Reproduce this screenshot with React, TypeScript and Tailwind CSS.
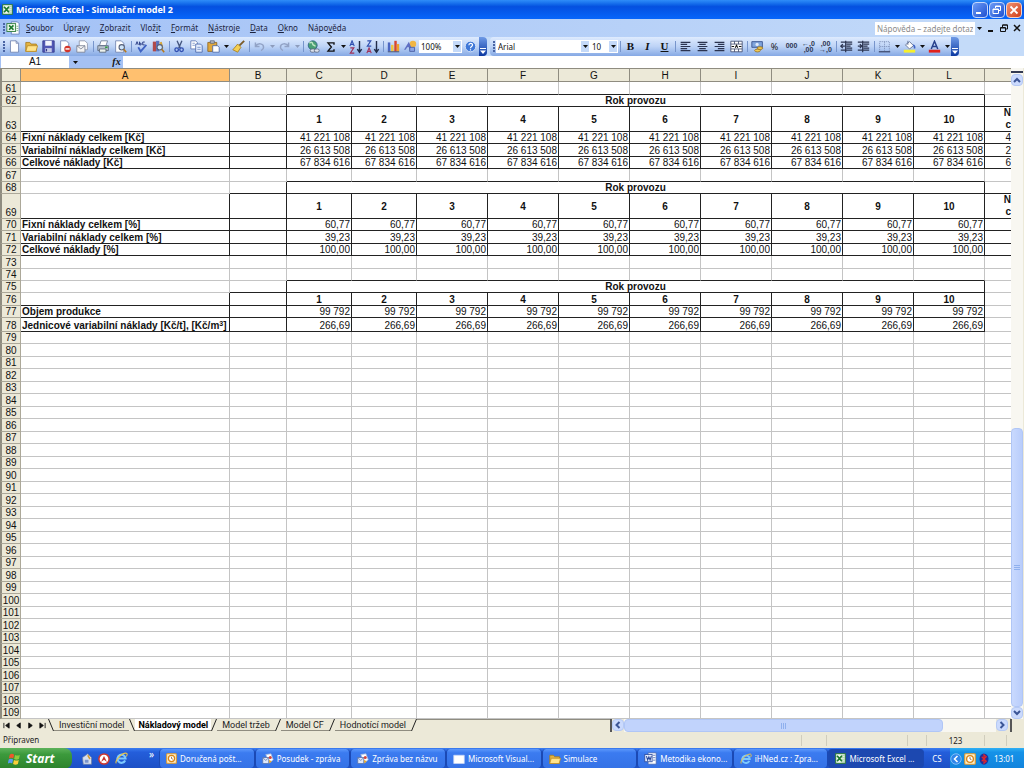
import { FC, ReactNode } from "react";
import clsx from "clsx";

/* SHEET DATA */

type Kind = "empty" | "title" | "years" | "data";

interface Row {
  n: number;
  h: string;
  kind: Kind;
  label?: ReactNode;
  value?: string;
  extra?: ReactNode;
}

const H12 = "h-[12px]";
const H13 = "h-[13px]";
const H14 = "h-[14px]";
const H25 = "h-[25px]";

const yearExtra = (
  <>
    N
    <br />c
  </>
);

const rows: Row[] = [
  { n: 61, h: H13, kind: "empty" },
  { n: 62, h: H12, kind: "title" },
  { n: 63, h: H25, kind: "years", extra: yearExtra },
  { n: 64, h: H12, kind: "data", label: "Fixní náklady celkem [Kč]", value: "41 221 108", extra: "4" },
  { n: 65, h: H13, kind: "data", label: "Variabilní náklady celkem [Kč]", value: "26 613 508", extra: "2" },
  { n: 66, h: H12, kind: "data", label: "Celkové náklady [Kč]", value: "67 834 616", extra: "6" },
  { n: 67, h: H13, kind: "empty" },
  { n: 68, h: H12, kind: "title" },
  { n: 69, h: H25, kind: "years", extra: yearExtra },
  { n: 70, h: H12, kind: "data", label: "Fixní náklady celkem [%]", value: "60,77", extra: " " },
  { n: 71, h: H13, kind: "data", label: "Variabilní náklady celkem [%]", value: "39,23", extra: " " },
  { n: 72, h: H12, kind: "data", label: "Celkové náklady [%]", value: "100,00", extra: " " },
  { n: 73, h: H13, kind: "empty" },
  { n: 74, h: H12, kind: "empty" },
  { n: 75, h: H12, kind: "title" },
  { n: 76, h: H13, kind: "years" },
  { n: 77, h: H12, kind: "data", label: "Objem produkce", value: "99 792" },
  {
    n: 78,
    h: H14,
    kind: "data",
    label: (
      <>
        Jednicové variabilní náklady [Kč/t], [Kč/m<sup className="text-[7px] leading-[0]">3</sup>]
      </>
    ),
    value: "266,69",
  },
];

for (let n = 79; n <= 109; n++) {
  rows.push({ n, h: n % 2 ? H12 : H13, kind: "empty" });
}

const years = [1, 2, 3, 4, 5, 6, 7, 8, 9, 10];
const letters = ["A", "B", "C", "D", "E", "F", "G", "H", "I", "J", "K", "L"];

/* SHEET */

const GRAY_R = "border-r-[#c4c4c4]";
const GRAY_B = "border-b-[#c4c4c4]";
const BLACK_R = "border-r-[#222]";
const BLACK_B = "border-b-[#222]";

interface CellProps {
  right?: boolean;
  bottom?: boolean;
  className?: string;
  colSpan?: number;
  children?: ReactNode;
}

const Cell: FC<CellProps> = ({ right, bottom, className, colSpan, children }) => (
  <td
    colSpan={colSpan}
    className={clsx(
      "border-r border-b px-px whitespace-nowrap overflow-hidden",
      right ? BLACK_R : GRAY_R,
      bottom ? BLACK_B : GRAY_B,
      className,
    )}
  >
    {children}
  </td>
);

const SheetRow: FC<{ row: Row; next?: Row }> = ({ row, next }) => {
  const { kind } = row;
  const boxed = kind === "years" || kind === "data";
  const aboveTitle = next?.kind === "title";
  const extraBottom =
    (boxed && row.extra !== undefined) || (kind === "title" && next?.extra !== undefined);
  return (
    <tr className={row.h}>
      <th className="border-r border-b border-l-2 border-[#aca899] border-l-[#8f8c80] bg-[#ece9d8] p-0 text-center align-bottom font-normal">
        {row.n}
      </th>
      <Cell right={boxed} bottom={boxed || next?.kind === "data"} className="align-bottom font-bold">
        {row.label}
      </Cell>
      <Cell right={boxed || kind === "title"} bottom={boxed || kind === "title"} />
      {kind === "title" ? (
        <Cell right bottom colSpan={10} className="text-center font-bold">
          Rok provozu
        </Cell>
      ) : (
        years.map((y) => (
          <Cell
            key={y}
            right={boxed}
            bottom={boxed || aboveTitle}
            className={kind === "years" ? "text-center align-middle font-bold" : "text-right align-bottom"}
          >
            {kind === "years" ? y : row.value}
          </Cell>
        ))
      )}
      <td
        className={clsx(
          "overflow-hidden border-b p-0 text-right align-bottom",
          extraBottom ? BLACK_B : GRAY_B,
          kind === "years" && "leading-[12px] font-bold",
        )}
      >
        {row.extra}
      </td>
    </tr>
  );
};

const Sheet: FC = () => (
  <table className="w-full table-fixed border-separate border-spacing-0 bg-white font-['Liberation_Sans',Arial,sans-serif] text-[10px] leading-[11px] text-[#111]">
    <colgroup>
      <col className="w-[21px]" />
      <col className="w-[209px]" />
      <col className="w-[57px]" />
      <col className="w-[65px]" />
      <col className="w-[65px]" />
      {letters.slice(4).map((l) => (
        <col key={l} className="w-[71px]" />
      ))}
      <col />
    </colgroup>
    <thead>
      <tr className="h-[14px] bg-[#ece9d8]">
        <th className="border border-l-2 border-[#8f8c80] p-0" />
        {letters.map((l) => (
          <th
            key={l}
            className={clsx(
              "border-y border-r border-[#8f8c80] p-0 font-normal",
              l === "A" && "bg-[#ffc06f]",
            )}
          >
            {l}
          </th>
        ))}
        <th className="border-y border-[#8f8c80] p-0" />
      </tr>
    </thead>
    <tbody>
      {rows.map((row, i) => (
        <SheetRow key={row.n} row={row} next={rows[i + 1]} />
      ))}
    </tbody>
  </table>
);

/* ICONS */

const Ico: FC<{ children: ReactNode; className?: string }> = ({ children, className }) => (
  <svg viewBox="0 0 16 16" fill="none" className={clsx("shrink-0", className ?? "size-[13px]")} aria-hidden>
    {children}
  </svg>
);

const page = "M3 1h7l3 3v11H3z";

const ExcelIcon: FC<{ className?: string }> = ({ className }) => (
  <Ico className={className}>
    <rect x="1" y="1" width="14" height="14" fill="#f4fbf2" stroke="#2c7a3a" strokeWidth="1.5" />
    <path d="M9 4h5M9 7h5M9 10h5M9 13h5" stroke="#6fae78" />
    <path d="M3 4l7 8M10 4l-7 8" stroke="#1d7a30" strokeWidth="2.6" />
  </Ico>
);

const WorkbookIcon: FC = () => (
  <Ico className="mr-[6px] size-[14px]">
    <path d="M6 1h7l2 2v12H6z" fill="#fff" stroke="#5f7fb8" />
    <path d="M12 6h2M12 8.5h2M12 11h2" stroke="#6fae78" />
    <rect x="1" y="3" width="10" height="9" fill="#eef8ec" stroke="#2c7a3a" />
    <path d="M3.5 5l5 5M8.5 5l-5 5" stroke="#1d7a30" strokeWidth="2" />
  </Ico>
);

const IEIcon: FC<{ className?: string }> = ({ className }) => (
  <Ico className={className}>
    <path d="M12.5 10.5A5 5 0 1 1 13 8H4" stroke="#7cc8ff" strokeWidth="2.6" />
    <path d="M1.5 14C-.5 10 9 .5 14 1.5c1.5.5 1 2.5 0 4" stroke="#f0c542" strokeWidth="1.3" />
  </Ico>
);

const OutlookIcon: FC<{ className?: string }> = ({ className }) => (
  <Ico className={className}>
    <rect x="1" y="1" width="14" height="14" rx="1" fill="#fff3cf" stroke="#e39a2b" strokeWidth="1.5" />
    <circle cx="8" cy="8" r="4.5" fill="#fff" stroke="#d98416" strokeWidth="1.8" />
    <path d="M8 5.5V8l2 1" stroke="#7a4a10" />
  </Ico>
);

const MessageIcon: FC<{ className?: string }> = ({ className }) => (
  <Ico className={className}>
    <path d="M5 2l7-1 3 8-5 4z" fill="#fff" stroke="#9db4dc" />
    <path d="M1 6h8v8H1z" fill="#dfe8fb" stroke="#5670a8" />
    <path d="M1 6l4 4 4-4" stroke="#5670a8" />
    <circle cx="11" cy="6" r="2" fill="#d2453c" />
    <path d="M9 9l4 2-3 3z" fill="#e7a62c" />
  </Ico>
);

const WordIcon: FC = () => (
  <Ico>
    <path d="M5 1h10v14H5z" fill="#fff" stroke="#4668b4" />
    <path d="M11 4h3M11 7h3M11 10h3" stroke="#4668b4" />
    <rect x="1" y="3" width="9" height="9" fill="#e8efff" stroke="#2b4a9c" />
    <path d="M3 5l1.5 5 1.5-4 1.5 4L9 5" stroke="#2b4a9c" strokeWidth="1.3" />
  </Ico>
);

const FolderIcon: FC<{ className?: string }> = ({ className }) => (
  <Ico className={className}>
    <path d="M1 3h5l1.5 2H14v9H1z" fill="#e3b341" stroke="#a77a1a" />
    <path d="M3 7h12.5L13.5 14H1z" fill="#ffe38a" stroke="#b88a26" />
  </Ico>
);

const Lens: FC = () => (
  <>
    <circle cx="9.5" cy="9" r="3.3" fill="#cfe6fb" stroke="#555f78" strokeWidth="1.3" />
    <path d="M12 11.5l3 3.5" stroke="#b7791d" strokeWidth="2" />
  </>
);

const Sort: FC<{ top: string; bottom: string }> = ({ top, bottom }) => (
  <Ico className="size-[14px]">
    <path d={top} stroke="#2f4fb0" strokeWidth="1.3" />
    <path d={bottom} stroke="#a0325a" strokeWidth="1.3" />
    <path d="M12 1v12M9.5 10.5L12 14l2.5-3.5" stroke="#222c48" strokeWidth="1.6" />
  </Ico>
);

const Lines: FC<{ d: string }> = ({ d }) => (
  <Ico>
    <path d={d} stroke="#2b3450" strokeWidth="1.5" />
  </Ico>
);

const Decimal: FC<{ left?: boolean }> = ({ left }) => (
  <span className="flex flex-col font-['Liberation_Sans',sans-serif] text-[7px] leading-[6px] font-bold text-[#2b3450]">
    <span>{left ? "←,0" : ",00"}</span>
    <span>{left ? ",00" : "→,0"}</span>
  </span>
);

/* TOOLBAR PARTS */

const Tool: FC<{ label: string; children: ReactNode }> = ({ label, children }) => (
  <button type="button" aria-label={label} className="flex h-full w-[17px] shrink-0 items-center justify-center">
    {children}
  </button>
);

const Triangle: FC<{ faded?: boolean }> = ({ faded }) => (
  <svg viewBox="0 0 5 3" className="h-[3px] w-[5px]" aria-hidden>
    <path d="M0 0h5L2.5 3z" fill={faded ? "#8d9cbc" : "#111"} />
  </svg>
);

const More: FC<{ label: string; faded?: boolean }> = ({ label, faded }) => (
  <button type="button" aria-label={label} className="flex h-full w-2 shrink-0 items-center justify-center">
    <Triangle faded={faded} />
  </button>
);

const Sep: FC = () => (
  <div className="flex w-1 shrink-0 justify-center">
    <div className="h-[11px] w-px bg-[#7795cc]" />
  </div>
);

const Grip: FC = () => (
  <div className="flex w-[6px] shrink-0 flex-col items-center gap-px pl-px">
    {[0, 1, 2, 3].map((i) => (
      <i key={i} className="size-[2px] bg-[#4a65a5]" />
    ))}
  </div>
);

const Overflow: FC<{ label: string }> = ({ label }) => (
  <button
    type="button"
    aria-label={label}
    className="flex h-full w-2 shrink-0 items-end justify-center rounded-r-sm bg-linear-to-b from-[#6f9ae6] to-[#0b37a0] pb-[2px]"
  >
    <svg viewBox="0 0 6 6" className="size-[6px]" aria-hidden>
      <path d="M0 0h6v1H0zM0 2.5h6L3 6z" fill="#fff" />
    </svg>
  </button>
);

const Combo: FC<{ label: string; value: string; className: string }> = ({ label, value, className }) => (
  <div className={clsx("relative h-[13px] shrink-0", className)}>
    <select
      aria-label={label}
      defaultValue={value}
      className="block size-full appearance-none bg-white pl-[2px] text-[8px] leading-[13px] text-[#111]"
    >
      <option>{value}</option>
    </select>
    <span className="pointer-events-none absolute inset-y-px right-px flex w-2 items-center justify-center bg-[#c4d9f8]">
      <Triangle />
    </span>
  </div>
);

const StandardBar: FC = () => (
  <div className="flex h-[19px] items-center rounded-r-sm bg-linear-to-b from-[#dfebfe] via-[#bdd3f6] to-[#86a9e4]">
    <Grip />
    <Tool label="Nový">
      <Ico><path d={page} fill="#fff" stroke="#6b7fae" /><path d="M10 1v3h3" stroke="#6b7fae" /></Ico>
    </Tool>
    <Tool label="Otevřít"><FolderIcon /></Tool>
    <Tool label="Uložit">
      <Ico>
        <path d="M1 1h14v14H1z" fill="#5157b4" stroke="#33388a" />
        <path d="M4 1h8v6H4z" fill="#f2f4fc" />
        <path d="M4 10h8v5H4z" fill="#c6cbe8" />
        <path d="M5.5 11v3" stroke="#33388a" strokeWidth="1.5" />
      </Ico>
    </Tool>
    <Tool label="Oprávnění">
      <Ico>
        <path d="M2 1h7l3 3v11H2z" fill="#fff" stroke="#6b7fae" />
        <circle cx="10.5" cy="11" r="4" fill="#d3362b" />
        <path d="M8 11h5" stroke="#fff" strokeWidth="1.8" />
      </Ico>
    </Tool>
    <Tool label="E-mail">
      <Ico>
        <path d="M4 1h7l3 3v8H4z" fill="#fff" stroke="#8b93a8" />
        <path d="M1 7h10v8H1z" fill="#f4f4f4" stroke="#777f92" />
        <path d="M1 7l5 4 5-4" stroke="#777f92" />
      </Ico>
    </Tool>
    <Sep />
    <Tool label="Tisk">
      <Ico>
        <path d="M5 1h8l-2 6H3z" fill="#fff" stroke="#6d7c94" />
        <path d="M1 7h13v6H1z" fill="#b9c3cf" stroke="#566276" />
        <path d="M3 11h8v4H3z" fill="#eef3ee" stroke="#566276" />
        <path d="M10 9h3" stroke="#2f9c3c" strokeWidth="2" />
      </Ico>
    </Tool>
    <Tool label="Náhled">
      <Ico><path d="M2 1h7l3 3v11H2z" fill="#fff" stroke="#6b7fae" /><Lens /></Ico>
    </Tool>
    <Sep />
    <Tool label="Pravopis">
      <Ico>
        <path d="M1 6l1.5-4L4 6M5.5 2v4h2V4h-2M12 2.5H9.5V6H12" stroke="#2b3f86" strokeWidth="1.2" />
        <path d="M4 9l3 5 7-8" stroke="#3f63c4" strokeWidth="2.2" />
      </Ico>
    </Tool>
    <Tool label="Zdroje informací">
      <Ico>
        <path d="M1 2h4v12H1z" fill="#b04a4a" />
        <path d="M5 1h4v13H5z" fill="#5a72bc" />
        <path d="M9 3l3-1 2 8-3 1z" fill="#d9a93a" />
        <Lens />
      </Ico>
    </Tool>
    <Sep />
    <Tool label="Vyjmout">
      <Ico>
        <path d="M5 1l4 9M11 1L7 10" stroke="#44557e" strokeWidth="1.6" />
        <circle cx="4.5" cy="12" r="2.2" stroke="#2f4db0" strokeWidth="1.6" />
        <circle cx="10.5" cy="12" r="2.2" stroke="#2f4db0" strokeWidth="1.6" />
      </Ico>
    </Tool>
    <Tool label="Kopírovat">
      <Ico>
        <path d="M1 1h6l2 2v8H1z" fill="#fff" stroke="#5a74b0" />
        <path d="M7 5h6l2 2v8H7z" fill="#e4edfd" stroke="#4562a8" />
        <path d="M9 9h4M9 11.5h4M3 4h3M3 6.5h3" stroke="#6d89c4" />
      </Ico>
    </Tool>
    <Tool label="Vložit">
      <Ico>
        <path d="M1 3h11v11H1z" fill="#e0a83c" stroke="#8c6420" />
        <path d="M4 1h5v3H4z" fill="#b9bfca" stroke="#5e6676" />
        <path d="M7 7h6l2 2v6H7z" fill="#fff" stroke="#4562a8" />
      </Ico>
    </Tool>
    <More label="Možnosti vložení" />
    <Tool label="Kopírovat formát">
      <Ico>
        <path d="M15 1l-6 6" stroke="#7a5a26" strokeWidth="2.2" />
        <path d="M7 5l4 4-4 6-6-3z" fill="#f4cf52" stroke="#a67c1c" />
      </Ico>
    </Tool>
    <Sep />
    <Tool label="Zpět">
      <Ico><path d="M3 3v5h5M3 8c3-5 10-4 10 1 0 2-1 3-3 4" stroke="#92a3c6" strokeWidth="1.8" /></Ico>
    </Tool>
    <More label="Historie zpět" faded />
    <Tool label="Znovu">
      <Ico><path d="M13 3v5H8M13 8C10 3 3 4 3 9c0 2 1 3 3 4" stroke="#92a3c6" strokeWidth="1.8" /></Ico>
    </Tool>
    <More label="Historie znovu" faded />
    <Sep />
    <Tool label="Hypertextový odkaz">
      <Ico>
        <circle cx="7" cy="6.5" r="5.5" fill="#4a9f74" stroke="#2b5f88" />
        <path d="M3 4c2-2 4-1 4 1s3 1 3 3" stroke="#bfe6c4" strokeWidth="1.8" />
        <rect x="4" y="11" width="6" height="4" rx="2" fill="#dde3ee" stroke="#59657e" />
        <rect x="9" y="11" width="6" height="4" rx="2" fill="#dde3ee" stroke="#59657e" />
      </Ico>
    </Tool>
    <Tool label="AutoSum">
      <Ico className="size-[12px]"><path d="M12 5V2.5H4L8.500 8 4 13.500H12V11" stroke="#111" strokeWidth="1.8" /></Ico>
    </Tool>
    <More label="Funkce" />
    <Tool label="Seřadit vzestupně"><Sort top="M1 7l2.5-6L6 7M2 5h3" bottom="M1.5 9h4L1.5 15h4.5" /></Tool>
    <Tool label="Seřadit sestupně"><Sort top="M1.5 1h4L1.5 7h4.5" bottom="M1 15l2.5-6L6 15M2 13h3" /></Tool>
    <Sep />
    <Tool label="Průvodce grafem">
      <Ico>
        <path d="M1 3h3v11H1z" fill="#4b66c2" />
        <path d="M5 6h3v8H5z" fill="#f0c63a" />
        <path d="M9 1h3v13H9z" fill="#d8452f" />
        <path d="M12 5h3v9h-3z" fill="#f0a02c" />
        <path d="M1 14.5h14" stroke="#37405c" />
      </Ico>
    </Tool>
    <Tool label="Kreslení">
      <Ico>
        <circle cx="11" cy="5" r="4" fill="#f1b645" />
        <path d="M6 2l4 10H7L6 9H4l-2 3H0z" fill="#5f6fc4" />
        <path d="M7 9h6v5H7z" fill="#8aa4e6" stroke="#42569c" />
      </Ico>
    </Tool>
    <Combo label="Lupa" value="100%" className="w-[43px]" />
    <Tool label="Nápověda">
      <Ico>
        <circle cx="8" cy="8" r="6.5" fill="#3f78d8" stroke="#e4eefc" />
        <path d="M6 6.5c0-3 4.5-3 4.5-.3C10.5 8 8 8 8 10M8 11.5V13" stroke="#fff" strokeWidth="1.5" />
      </Ico>
    </Tool>
    <Overflow label="Možnosti panelu Standardní" />
  </div>
);

const FormatBar: FC = () => (
  <div className="flex h-[19px] items-center rounded-sm bg-linear-to-b from-[#dfebfe] via-[#bdd3f6] to-[#86a9e4]">
    <Grip />
    <Combo label="Písmo" value="Arial" className="w-[94px]" />
    <Combo label="Velikost písma" value="10" className="w-[28px]" />
    <Sep />
    <Tool label="Tučné"><b className="font-['Liberation_Serif',serif] text-[11px] font-black text-[#111]">B</b></Tool>
    <Tool label="Kurzíva"><i className="font-['Liberation_Serif',serif] text-[11px] font-bold text-[#111]">I</i></Tool>
    <Tool label="Podtržené"><u className="font-['Liberation_Serif',serif] text-[11px] font-bold text-[#111]">U</u></Tool>
    <Sep />
    <Tool label="Zarovnat vlevo"><Lines d="M2 3h12M2 5.5h8M2 8h12M2 10.5h8M2 13h12" /></Tool>
    <Tool label="Na střed"><Lines d="M2 3h12M4 5.5h8M2 8h12M4 10.5h8M2 13h12" /></Tool>
    <Tool label="Zarovnat vpravo"><Lines d="M2 3h12M6 5.5h8M2 8h12M6 10.5h8M2 13h12" /></Tool>
    <Tool label="Sloučit a zarovnat na střed">
      <Ico>
        <path d="M1 1.5h14v13H1zM1 5h14M1 11h14M5.5 1.5V5M10.5 1.5V5M5.5 11v3.5M10.5 11v3.5" fill="#fff" stroke="#3b466a" />
        <path d="M2 8h3M11 8h3M6.5 9.5L8 6.5l1.5 3" stroke="#111" strokeWidth="1.3" />
      </Ico>
    </Tool>
    <Sep />
    <Tool label="Měna">
      <Ico>
        <path d="M1 2h13v7H1z" fill="#7fa4dc" stroke="#2f4a86" />
        <circle cx="7.5" cy="5.5" r="2" fill="#dfe9f9" />
        <ellipse cx="11" cy="10" rx="3.5" ry="1.7" fill="#f3cb54" stroke="#96701c" />
        <ellipse cx="8" cy="13" rx="3.5" ry="1.7" fill="#f3cb54" stroke="#96701c" />
      </Ico>
    </Tool>
    <Tool label="Styl procent"><span className="text-[9px] text-[#222]">%</span></Tool>
    <Tool label="Styl čárky"><span className="font-['Liberation_Sans',sans-serif] text-[7px] font-bold text-[#2b3450]">000</span></Tool>
    <Tool label="Přidat desetinné místo"><Decimal left /></Tool>
    <Tool label="Odebrat desetinné místo"><Decimal /></Tool>
    <Sep />
    <Tool label="Zmenšit odsazení"><Lines d="M1 2.5h14M8 5h7M8 7.5h5M8 10h7M1 12.5h14M6 7.5H1M3.5 5L1 7.5 3.5 10M7 1v14" /></Tool>
    <Tool label="Zvětšit odsazení"><Lines d="M1 2.5h14M8 5h7M8 7.5h5M8 10h7M1 12.5h14M1 7.5h5M3.5 5L6 7.5 3.5 10M7 1v14" /></Tool>
    <Sep />
    <Tool label="Ohraničení">
      <Ico>
        <path d="M2 2h12v12H2zM8 2v12M2 8h12" stroke="#7c8fb8" strokeDasharray="1.5 1" />
        <path d="M1 14.5h14" stroke="#39456a" strokeWidth="1.5" />
      </Ico>
    </Tool>
    <More label="Typy ohraničení" />
    <Tool label="Barva výplně">
      <Ico>
        <path d="M3 6l5-4 5 5-5 4z" fill="#fff" stroke="#56658a" />
        <path d="M6 1v5" stroke="#56658a" />
        <path d="M12.5 6c2 1 2 3 1.5 4.5" stroke="#3f63c4" strokeWidth="2" />
        <path d="M1 12h14v3.5H1z" fill="#f7f02a" />
      </Ico>
    </Tool>
    <More label="Barvy výplně" />
    <Tool label="Barva písma">
      <Ico>
        <path d="M4 11L8 1.5 12 11M5.5 8h5" stroke="#27408c" strokeWidth="1.8" />
        <path d="M1 12h14v3.5H1z" fill="#e0211b" />
      </Ico>
    </Tool>
    <More label="Barvy písma" />
    <Overflow label="Možnosti panelu Formát" />
  </div>
);

/* WINDOW CHROME */

const TitleBar: FC = () => (
  <header className="flex h-[19px] items-center gap-[3px] bg-linear-to-b from-[#2f8df8] via-[#0550e0] via-35% to-[#0766fb] px-[2px]">
    <ExcelIcon className="size-[11px]" />
    <h1 className="flex-1 font-['Noto_Sans',sans-serif] text-[9px] font-bold text-white">
      Microsoft Excel - Simulační model 2
    </h1>
    <div className="flex gap-px">
      <button type="button" aria-label="Minimalizovat" className="flex size-4 items-center justify-center rounded-sm border border-[#c5d8fb] bg-linear-to-br from-[#6d9bf6] to-[#1f4fd0]">
        <svg viewBox="0 0 10 10" className="size-[10px]"><path d="M1 7h5v2H1z" fill="#fff" /></svg>
      </button>
      <button type="button" aria-label="Obnovit" className="flex size-4 items-center justify-center rounded-sm border border-[#c5d8fb] bg-linear-to-br from-[#6d9bf6] to-[#1f4fd0]">
        <svg viewBox="0 0 10 10" className="size-[10px]" fill="none" stroke="#fff">
          <path d="M3.5 3V1h5v4.5H7M3.5 1.5h5M1 4h5.5v4.5H1zM1 4.5h5.5" />
        </svg>
      </button>
      <button type="button" aria-label="Zavřít" className="flex size-4 items-center justify-center rounded-sm border border-[#f3d3c8] bg-linear-to-br from-[#f0906f] to-[#cf3a12]">
        <svg viewBox="0 0 10 10" className="size-[10px]"><path d="M1.5 1.5l7 7M8.5 1.5l-7 7" stroke="#fff" strokeWidth="1.8" /></svg>
      </button>
    </div>
  </header>
);

const menus = [
  ["", "S", "oubor"],
  ["Úpr", "a", "vy"],
  ["", "Z", "obrazit"],
  ["Vlož", "i", "t"],
  ["", "F", "ormát"],
  ["", "N", "ástroje"],
  ["", "D", "ata"],
  ["", "O", "kno"],
  ["Nápo", "v", "ěda"],
];

const MenuBar: FC = () => (
  <nav className="flex h-[18px] items-center bg-linear-to-r from-[#a3c1f6] to-[#c4dbf9] text-[8px] text-[#1c2440]">
    <Grip />
    <WorkbookIcon />
    <div className="flex flex-1 gap-[10px]">
      {menus.map(([pre, key, post]) => (
        <button key={post} type="button">
          {pre}
          <u>{key}</u>
          {post}
        </button>
      ))}
    </div>
    <input
      aria-label="Nápověda"
      placeholder="Nápověda – zadejte dotaz"
      className="h-[13px] w-[100px] bg-white px-[2px] placeholder:text-[#8a8a8a]"
    />
    <More label="Předchozí dotazy" />
    <div className="ml-1 flex items-center gap-[5px] pr-[3px]">
      <button type="button" aria-label="Minimalizovat sešit">
        <svg viewBox="0 0 8 8" className="size-2"><path d="M1 6h5v2H1z" fill="#111" /></svg>
      </button>
      <button type="button" aria-label="Obnovit sešit">
        <svg viewBox="0 0 8 8" className="size-2" fill="none" stroke="#111"><path d="M2.5 3V1h5v4H6M2.5 1h5M.5 3.5h5v4h-5zM.5 4h5" /></svg>
      </button>
      <button type="button" aria-label="Zavřít sešit">
        <svg viewBox="0 0 8 8" className="size-2"><path d="M1 1l6 6M7 1L1 7" stroke="#111" strokeWidth="1.5" /></svg>
      </button>
    </div>
  </nav>
);

const FormulaBar: FC = () => (
  <div className="flex h-3 bg-[#a5c1f3] font-['Liberation_Sans',sans-serif] text-[10px] text-[#111]">
    <input aria-label="Pole názvů" defaultValue="A1" className="ml-px w-[68px] bg-white text-center leading-3" />
    <button type="button" aria-label="Seznam názvů" className="flex w-3 items-center justify-center">
      <Triangle />
    </button>
    <button type="button" aria-label="Vložit funkci" className="ml-auto flex w-[13px] items-center justify-center font-['Liberation_Serif',serif] text-[10px] leading-3 font-bold italic">
      fx
    </button>
    <input aria-label="Řádek vzorců" className="w-[calc(100%-123px)] bg-white" />
  </div>
);

/* SCROLLBARS */

const arrows = {
  up: "M1 6l3-3 3 3",
  down: "M1 2l3 3 3-3",
  left: "M5.5 1l-3 3 3 3",
  right: "M2.5 1l3 3-3 3",
};

const ScrollButton: FC<{ label: string; dir: keyof typeof arrows }> = ({ label, dir }) => (
  <button type="button" aria-label={label} className="flex size-3 shrink-0 items-center justify-center rounded-sm border border-[#b5c9f5] bg-[#cbdafd]">
    <svg viewBox="0 0 8 8" className="size-2" fill="none">
      <path d={arrows[dir]} stroke="#3b5596" strokeWidth="2" />
    </svg>
  </button>
);

const VerticalScroll: FC = () => (
  <div className="flex w-[13px] shrink-0 flex-col border-r border-[#ece9d8] bg-[#f8f7f1] pt-[3px]">
    <div className="mb-px h-[2px] bg-[#333a52]" />
    <ScrollButton label="Nahoru" dir="up" />
    <div className="flex-[343]" />
    <div className="flex flex-[277] flex-col items-center justify-center gap-px rounded-sm border border-[#b0c6f6] bg-linear-to-r from-[#c9d9fe] to-[#b9cdfb]">
      <i className="h-px w-[6px] bg-[#8fb0ee]" />
      <i className="h-px w-[6px] bg-[#8fb0ee]" />
      <i className="h-px w-[6px] bg-[#8fb0ee]" />
    </div>
    <ScrollButton label="Dolů" dir="down" />
  </div>
);

/* SHEET TABS */

const sheets = ["Investiční model", "Nákladový model", "Model tržeb", "Model CF", "Hodnotící model"];

const tabNav = [
  ["První list", "M1 1v6M7 1v6L3 4z"],
  ["Předchozí list", "M6 1v6L2 4z"],
  ["Další list", "M2 1v6l4-3z"],
  ["Poslední list", "M7 1v6M1 1v6l4-3z"],
];

const Slash: FC<{ back?: boolean }> = ({ back }) => (
  <svg viewBox="0 0 6 12" className="h-3 w-[6px] shrink-0" aria-hidden>
    <path d={back ? "M.5 0l5 12" : "M5.5 0l-5 12"} stroke="#222" />
  </svg>
);

const SheetTabs: FC = () => (
  <div className="flex h-[13px] bg-[#ece9d8] font-[Roboto,sans-serif] text-[9px] leading-3 text-[#222]">
    <div className="flex flex-[611] items-start">
      <div className="flex">
        {tabNav.map(([label, d]) => (
          <button key={label} type="button" aria-label={label} className="flex h-3 w-3 items-center justify-center">
            <svg viewBox="0 0 8 8" className="size-[7px]">
              <path d={d} fill="#111" stroke="#111" />
            </svg>
          </button>
        ))}
      </div>
      <Slash back />
      {sheets.map((name, i) => (
        <div key={name} className="flex">
          <button
            type="button"
            className={clsx(
              "h-3 border-b border-[#8f8c80] whitespace-nowrap",
              i === 1 ? "bg-white px-[3px] font-bold text-[#000]" : "px-[5px]",
            )}
          >
            {name}
          </button>
          <Slash back={i === 0} />
        </div>
      ))}
      <div className="h-px flex-1 bg-[#8f8c80]" />
    </div>
    <div className="flex flex-[413] border-l-2 border-[#555]">
      <ScrollButton label="Vlevo" dir="left" />
      <div className="flex flex-1 bg-[#f8f7f1]">
        <div className="flex flex-[318] items-center justify-center gap-px rounded-sm border border-[#b0c6f6] bg-[#c1d3fc]">
          <i className="h-[6px] w-px bg-[#8fb0ee]" />
          <i className="h-[6px] w-px bg-[#8fb0ee]" />
          <i className="h-[6px] w-px bg-[#8fb0ee]" />
        </div>
        <div className="flex-[53]" />
      </div>
      <ScrollButton label="Vpravo" dir="right" />
      <div className="mr-3 ml-[2px] w-[2px] bg-[#555]" />
    </div>
  </div>
);

const statusCells = ["w-[25px]", "w-[81px]", "w-[19px]", "w-[58px]", "w-[22px]", "w-[18px]"];

const StatusBar: FC = () => (
  <footer className="flex h-4 items-center bg-[#ece9d8] pl-[3px] text-[8px] text-[#222]">
    <span className="flex-1">Připraven</span>
    {statusCells.map((w, i) => (
      <span key={w} className={clsx("h-[11px] border-l border-[#d0cdbd] text-center leading-[11px]", w)}>
        {i === 3 ? "123" : ""}
      </span>
    ))}
  </footer>
);

/* TASKBAR */

const tasks: { name: string; icon: ReactNode }[] = [
  { name: "Doručená pošt...", icon: <OutlookIcon className="size-[11px]" /> },
  { name: "Posudek - zpráva", icon: <MessageIcon className="size-[12px]" /> },
  { name: "Zpráva bez názvu", icon: <MessageIcon className="size-[12px]" /> },
  { name: "Microsoft Visual...", icon: <Ico className="size-[12px]"><path d="M1 3h14v11H1z" fill="#fff" stroke="#c5d6f7" /></Ico> },
  { name: "Simulace", icon: <FolderIcon className="size-[12px]" /> },
  { name: "Metodika ekono...", icon: <WordIcon /> },
  { name: "iHNed.cz : Zpra...", icon: <IEIcon className="size-[12px]" /> },
  { name: "Microsoft Excel ...", icon: <ExcelIcon className="size-[11px]" /> },
];

const Taskbar: FC = () => (
  <div className="flex h-[21px] items-stretch bg-linear-to-b from-[#3c7df0] via-[#245edb] via-20% to-[#1c4fc4] text-[8px] text-white">
    <button
      type="button"
      className="flex w-[72px] shrink-0 items-center gap-1 rounded-r-lg bg-linear-to-b from-[#5db25b] via-[#3c9a3c] via-30% to-[#2c822c] pl-2 font-['Open_Sans',sans-serif] text-[12px] font-bold italic"
    >
      <Ico className="size-[14px]">
        <path d="M2 3c2-1.5 3.5-1 5 0L6 7.5c-1.5-1-3-1.2-5 0z" fill="#f0562b" />
        <path d="M8 3.3c2 1 3.5 1 5.5 0L12.5 8c-2 1-3.5 1-5.5 0z" fill="#8ecb3c" />
        <path d="M.8 8.7c2-1.5 3.5-1 5 0l-1 4.5c-1.5-1-3-1.2-5 0z" fill="#5a9cf5" />
        <path d="M6.8 9c2 1 3.5 1 5.5 0l-1 4.7c-2 1-3.5 1-5.5 0z" fill="#fbd03a" />
      </Ico>
      Start
    </button>
    <div className="flex w-[87px] shrink-0 items-center gap-[5px] pl-[9px]">
      <button type="button" aria-label="Zobrazit plochu">
        <Ico className="size-[12px]">
          <path d="M2 6l7-5 5 5v9H3z" fill="#d6dfef" stroke="#6c7da4" />
          <path d="M5 9h5v4H5z" fill="#7a94cc" />
          <path d="M9 3l3 5" stroke="#d59b2f" strokeWidth="2" />
        </Ico>
      </button>
      <button type="button" aria-label="Přehrávač">
        <Ico className="size-[12px]">
          <circle cx="8" cy="8" r="6.8" fill="#fff" stroke="#d0372f" strokeWidth="2" />
          <path d="M4 12l4-8 4 8-4-3z" fill="#c8322b" />
        </Ico>
      </button>
      <button type="button" aria-label="Internet Explorer"><IEIcon className="size-[13px]" /></button>
      <button type="button" className="mr-[5px] ml-auto self-start text-[10px] leading-3">»</button>
    </div>
    <div className="flex flex-1 items-stretch py-px">
      {tasks.map(({ name, icon }, i) => (
        <button
          key={name}
          type="button"
          className={clsx(
            "flex min-w-0 flex-1 items-center gap-[3px] rounded-sm border-r border-l border-[#1b49b4] pl-[6px] whitespace-nowrap",
            i === 7 ? "bg-[#1c48b0]" : "bg-linear-to-b from-[#5b97fb] via-[#3b7bf0] via-20% to-[#3572e6]",
          )}
        >
          {icon}
          {name}
        </button>
      ))}
    </div>
    <button type="button" className="w-[26px] shrink-0 text-center">CS</button>
    <div className="flex w-[74px] shrink-0 items-center gap-[2px] bg-linear-to-b from-[#2fb0f4] via-[#1592e8] via-20% to-[#1283dc]">
      <button type="button" aria-label="Zobrazit skryté ikony">
        <Ico className="size-[12px]">
          <circle cx="8" cy="8" r="7" fill="#2f86ea" stroke="#9cd0fb" />
          <path d="M10 4L6 8l4 4" stroke="#fff" strokeWidth="2" />
        </Ico>
      </button>
      <OutlookIcon className="size-[12px]" />
      <Ico className="size-[12px]">
        <ellipse cx="8" cy="8" rx="6" ry="7.5" fill="#1c2f9c" />
        <path d="M5 5l6 6-3 2.5v-11L11 5l-6 6" stroke="#e0252b" strokeWidth="1.6" />
      </Ico>
      <time className="ml-[2px]">13:01</time>
    </div>
  </div>
);

/* APP */

const App: FC = () => (
  <div className="flex min-h-screen flex-col overflow-hidden bg-[#ece9d8] font-['Noto_Sans',Tahoma,sans-serif]">
    <TitleBar />
    <MenuBar />
    <div className="flex gap-[3px] bg-[#c4dbf9]">
      <StandardBar />
      <FormatBar />
    </div>
    <FormulaBar />
    <main className="flex">
      <div className="min-w-0 flex-1">
        <Sheet />
      </div>
      <VerticalScroll />
    </main>
    <SheetTabs />
    <StatusBar />
    <Taskbar />
  </div>
);

export default App;
